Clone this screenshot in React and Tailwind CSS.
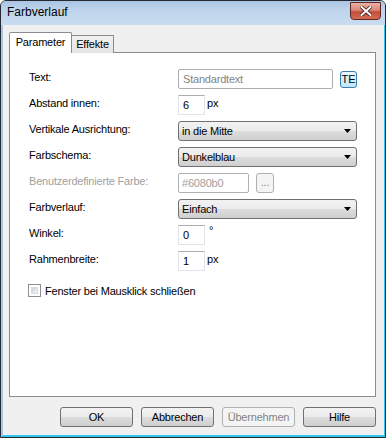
import React from 'react';

// Farbverlauf dialog, Windows 7 basic look

const font = { fontFamily: '"Liberation Sans", Arial, sans-serif' };

function Label({ children, disabled }) {
  return (
    <div className={`w-[149px] shrink-0 pt-[1px] leading-[14px] ${disabled ? 'text-[#a0a0a0]' : 'text-black'}`}>
      {children}
    </div>
  );
}

function Select({ value }) {
  return (
    <div className="w-[179px] h-[20px] rounded-[3px] border border-[#707070] bg-[linear-gradient(#f2f2f2_0%,#ebebeb_50%,#dddddd_51%,#cfcfcf_100%)] flex items-center justify-between pl-[3px] pr-[5px]">
      <span className="leading-[14px]">{value}</span>
      <svg width="7" height="4" viewBox="0 0 7 4">
        <path d="M0 0 H7 L3.5 4 Z" fill="#000" />
      </svg>
    </div>
  );
}

function SmallInput({ value }) {
  return (
    <div className="w-[27px] h-[20px] border border-[#e2e3ea] border-t-[#abadb3] bg-white pl-[4px] flex items-center leading-[14px]">
      {value}
    </div>
  );
}

function Button({ children, disabled }) {
  return (
    <div
      className={`w-[73px] h-[20px] rounded-[3px] border flex items-center justify-center leading-[14px] ${
        disabled
          ? 'border-[#adb2b5] bg-[#f4f4f4] text-[#838383]'
          : 'border-[#707070] bg-[linear-gradient(#f2f2f2_0%,#ebebeb_50%,#dddddd_51%,#cfcfcf_100%)] text-black'
      }`}
    >
      {children}
    </div>
  );
}

export default function App() {
  return (
    <div style={font} className="w-[386px] h-[438px] text-[11px] tracking-[-0.2px] text-black">
      <div className="w-full h-full flex flex-col border border-[#262a30] rounded-t-[6px] overflow-hidden bg-[#bcd2ec]">
        {/* title bar */}
        <div className="h-[24px] shrink-0 flex items-center justify-between pl-[6px] pr-[4px] bg-[linear-gradient(#a9c4e4_0%,#bed3ec_35%,#c9dcf0_100%)]">
          <span className="text-[12px] tracking-normal leading-[16px] pb-[2px]">Farbverlauf</span>
          <div className="w-[31px] h-[18px] mb-[4px] rounded-b-[4px] border border-[#5e2820] bg-[linear-gradient(#eab1a4_0%,#d98776_45%,#c34d3b_55%,#d36c55_100%)] flex items-center justify-center">
            <svg width="12" height="10" viewBox="0 0 12 10">
              <path d="M1.5 1 L10.5 9 M10.5 1 L1.5 9" stroke="#3b1a14" strokeWidth="3.6" strokeLinecap="square" />
              <path d="M1.5 1 L10.5 9 M10.5 1 L1.5 9" stroke="#ffffff" strokeWidth="2" strokeLinecap="square" />
            </svg>
          </div>
        </div>

        {/* body */}
        <div className="flex-1 flex flex-col bg-[#f0f0f0] border-l-2 border-l-[#a9c5e6] border-r border-r-[#34c6ee] border-b-2 border-b-[#34c6ee] pl-[6px] pt-[7px]">
          {/* tabs */}
          <div className="flex items-end h-[21px] relative z-10">
            <div className="w-[63px] h-[21px] border border-b-0 border-[#898c95] bg-white rounded-t-[2px] flex items-center justify-center pb-[1px]">
              Parameter
            </div>
            <div className="w-[43px] h-[18px] -ml-[1px] border border-b-0 border-[#898c95] bg-[linear-gradient(#f2f2f2,#e3e3e3)] flex items-center justify-center">
              Effekte
            </div>
          </div>

          {/* panel */}
          <div className="w-[367px] h-[345px] -mt-[1px] border border-[#898c95] bg-white pl-[19px] pt-[16px]">
            <div className="flex h-[20px]">
              <Label>Text:</Label>
              <div className="w-[155px] h-[20px] border border-[#abadb3] rounded-[2px] bg-white pl-[4px] flex items-center text-[#838383] leading-[14px]">
                Standardtext
              </div>
              <div className="ml-[7px] mt-[2px] w-[17px] h-[17px] rounded-[3px] border border-[#3c7fb1] bg-[linear-gradient(#eaf6fd,#bee6fd)] flex items-center justify-center text-[11px] tracking-normal leading-none">
                TE
              </div>
            </div>

            <div className="flex h-[20px] mt-[6px]">
              <Label>Abstand innen:</Label>
              <SmallInput value="6" />
              <span className="ml-[2px] leading-[14px] pt-[1px]">px</span>
            </div>

            <div className="flex h-[20px] mt-[6px]">
              <Label>Vertikale Ausrichtung:</Label>
              <Select value="in die Mitte" />
            </div>

            <div className="flex h-[20px] mt-[6px]">
              <Label>Farbschema:</Label>
              <Select value="Dunkelblau" />
            </div>

            <div className="flex h-[20px] mt-[6px]">
              <Label disabled>Benutzerdefinierte Farbe:</Label>
              <div className="w-[71px] h-[20px] border border-[#adb2b5] rounded-[2px] bg-white pl-[3px] flex items-center text-[#a0a0a0] leading-[14px]">
                #6080b0
              </div>
              <div className="ml-[7px] w-[18px] h-[20px] rounded-[3px] border border-[#adb2b5] bg-[#f4f4f4] flex items-end justify-center pb-[4px] text-[#838383] leading-none">
                ...
              </div>
            </div>

            <div className="flex h-[20px] mt-[6px]">
              <Label>Farbverlauf:</Label>
              <Select value="Einfach" />
            </div>

            <div className="flex h-[20px] mt-[6px]">
              <Label>Winkel:</Label>
              <SmallInput value="0" />
              <span className="ml-[4px] leading-[10px]">°</span>
            </div>

            <div className="flex h-[20px] mt-[6px]">
              <Label>Rahmenbreite:</Label>
              <SmallInput value="1" />
              <span className="ml-[2px] leading-[14px] pt-[1px]">px</span>
            </div>

            <div className="flex items-center h-[13px] mt-[13px] -ml-[1px]">
              <div className="w-[13px] h-[13px] border border-[#8e8f8f] bg-white p-[2px]">
                <div className="w-full h-full bg-[linear-gradient(135deg,#cbcfd5,#f6f6f6)] border border-[#d8dbe0]" />
              </div>
              <span className="ml-[4px] leading-[14px]">Fenster bei Mausklick schließen</span>
            </div>
          </div>

          {/* buttons */}
          <div className="w-[367px] flex justify-end gap-[8px] mt-[10px]">
            <Button>OK</Button>
            <Button>Abbrechen</Button>
            <Button disabled>Übernehmen</Button>
            <Button>Hilfe</Button>
          </div>
        </div>
      </div>
    </div>
  );
}
